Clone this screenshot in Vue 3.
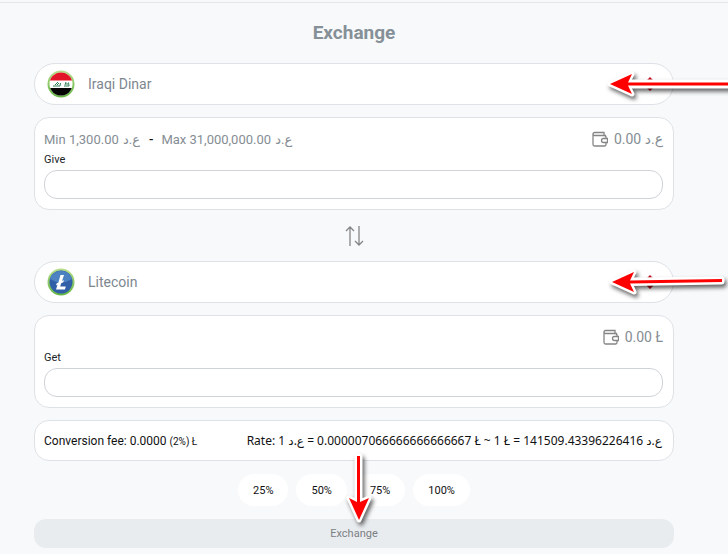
<script setup>
import { ref } from 'vue'

const from = ref('Iraqi Dinar')
const to = ref('Litecoin')
const give = ref('')
const get = ref('')
const percents = [25, 50, 75, 100]

function swap() {
  const previous = from.value
  from.value = to.value
  to.value = previous
}
</script>

<template>
  <main class="page">
    <h1>Exchange</h1>

    <div class="picker">
      <svg class="coin" viewBox="0 0 28 28" aria-hidden="true">
        <defs>
          <linearGradient id="ring" x1="0" y1="0" x2="0" y2="1">
            <stop offset="0" stop-color="#b9df8d" />
            <stop offset="1" stop-color="#62b441" />
          </linearGradient>
          <clipPath id="disc"><circle cx="14" cy="14" r="11.5" /></clipPath>
        </defs>
        <circle cx="14" cy="14" r="13.5" fill="url(#ring)" />
        <g clip-path="url(#disc)">
          <path fill="#fff" d="M2 2h24v24H2z" />
          <path fill="#e31528" d="M2 2h24v8.500H2z" />
          <path fill="#050505" d="M2 18h24v8H2z" />
        </g>
        <path d="M6 16h7l.5-3M8 15l3-3M10 15l2-2M17 16h5l-.5-3.500M18 15l1-3M20 15v-2" fill="none" stroke="#2f8058" stroke-width="1" />
      </svg>
      <select v-model="from" aria-label="Currency to give">
        <option>Iraqi Dinar</option>
        <option>Litecoin</option>
      </select>
      <svg class="chevrons" viewBox="0 0 6 14" aria-hidden="true"><path d="M0 4V3l3-3 3 3v1zM0 10v1l3 3 3-3v-1z" fill="#c40d1b" /></svg>
      <svg class="pointer" viewBox="0 0 130 36" aria-hidden="true">
        <path d="M3 18L25 8L21 16H140V20H21L25 28Z" fill="#f00" stroke="#fff" stroke-width="5" stroke-linejoin="round" />
        <path d="M3 18L25 8L21 16.500H140V19.500H21L25 28Z" fill="#f00" />
      </svg>
    </div>

    <section class="card">
      <div class="info">
        <p class="limits">
          <span>Min 1,300.00 <bdi class="unit">ع.د</bdi></span>
          <b>-</b>
          <span>Max 31,000,000.00 <bdi class="unit">ع.د</bdi></span>
        </p>
        <p class="balance">
          <svg class="wallet" viewBox="0 0 16 16" aria-hidden="true">
            <path d="M13.500 6V4.500H2.500A1.500 1.500 0 0 1 2.500 1.500H12V4.500M1 3V13.500A1.500 1.500 0 0 0 2.500 15H12.500A1.500 1.500 0 0 0 14 13.500V11.500M14 8V6A1.500 1.500 0 0 0 12.500 4.500M15.500 7.500V11.500H11.500A2 2 0 0 1 11.500 7.500Z" />
          </svg>
          <span>0.00 <bdi>ع.د</bdi></span>
        </p>
      </div>
      <label for="give">Give</label>
      <input id="give" v-model="give" type="text" inputmode="decimal">
    </section>

    <button class="swap" type="button" aria-label="Swap currencies" @click="swap">
      <svg viewBox="0 0 20 20" aria-hidden="true"><path d="M6 20V1M2 5l4-4 4 4M15 0v19M11 15l4 4 4-4" /></svg>
    </button>

    <div class="picker">
      <svg class="coin" viewBox="0 0 28 28" aria-hidden="true">
        <circle cx="14" cy="14" r="13.500" fill="url(#ring)" />
        <circle cx="14" cy="14" r="11.500" fill="#315fa7" />
        <path d="M3 11A11.500 11.500 0 0 1 25 11Q14 18 3 11" fill="#4d82c2" />
        <path d="M13.500 7h3.500l-2 6 2-1-.8 2.300-2 1-1 3.200h5.600l-.9 3H9l1.500-4.700-1.500.7.700-2.300 1.700-.8z" fill="#fff" />
      </svg>
      <select v-model="to" aria-label="Currency to get">
        <option>Litecoin</option>
        <option>Iraqi Dinar</option>
      </select>
      <svg class="chevrons" viewBox="0 0 6 14" aria-hidden="true"><path d="M0 4V3l3-3 3 3v1zM0 10v1l3 3 3-3v-1z" fill="#c40d1b" /></svg>
      <svg class="pointer" viewBox="0 0 130 36" aria-hidden="true">
        <path d="M5 18L27 8L23 16L115 15V18L23 19.500L27 28Z" fill="#f00" stroke="#fff" stroke-width="5" stroke-linejoin="round" />
        <path d="M5 18L27 8L23 16.500L115 15V18L23 19.500L27 28Z" fill="#f00" />
      </svg>
    </div>

    <section class="card">
      <div class="info end">
        <p class="balance">
          <svg class="wallet" viewBox="0 0 16 16" aria-hidden="true">
            <path d="M13.500 6V4.500H2.500A1.500 1.500 0 0 1 2.500 1.500H12V4.500M1 3V13.500A1.500 1.500 0 0 0 2.500 15H12.500A1.500 1.500 0 0 0 14 13.500V11.500M14 8V6A1.500 1.500 0 0 0 12.500 4.500M15.500 7.500V11.500H11.500A2 2 0 0 1 11.500 7.500Z" />
          </svg>
          <span>0.00 Ł</span>
        </p>
      </div>
      <label for="get">Get</label>
      <input id="get" v-model="get" type="text" inputmode="decimal">
    </section>

    <section class="rates">
      <p>Conversion fee: 0.0000 <small>(2%) Ł</small></p>
      <p class="rate">Rate: 1 <bdi>ع.د</bdi> = 0.000007066666666666667 Ł ~ 1 Ł = 141509.43396226416 <bdi>ع.د</bdi></p>
    </section>

    <div class="percents">
      <button v-for="p in percents" :key="p" type="button">{{ p }}%</button>
      <svg class="pointer-down" viewBox="0 0 36 80" aria-hidden="true">
        <path d="M18 71L8 49L16 53V7H19V53L28 49Z" fill="#f00" stroke="#fff" stroke-width="5" stroke-linejoin="round" />
        <path d="M18 71L8 49L16 53V7H19V53L28 49Z" fill="#f00" />
      </svg>
    </div>

    <button class="submit" type="button">Exchange</button>
  </main>
</template>

<style>
body {
  background: #f8f9fb;
}
</style>

<style scoped>
.page {
  display: flex;
  flex-direction: column;
  padding: 17px 54px 6px 34px;
  border-top: 1px solid #e4e6e9;
  margin-top: 2px;
  overflow: hidden;
  color: #111;
  font-family: Roboto, "DejaVu Sans", sans-serif;
  font-size: 12px;
}

h1 {
  margin: 0 0 18px;
  color: #869097;
  font-size: 19px;
  font-weight: 700;
  line-height: 25px;
  text-align: center;
}

p {
  margin: 0;
}

button,
input,
select {
  box-sizing: border-box;
  font: inherit;
}

.picker,
.card,
.rates {
  box-sizing: border-box;
  border: 1px solid #dee2e6;
  background: #fff;
}

.picker {
  position: relative;
  display: flex;
  align-items: center;
  height: 42px;
  padding: 0 20px 0 12px;
  border-radius: 21px;
}

.coin {
  width: 28px;
  height: 28px;
}

.picker select {
  flex: 1;
  height: 40px;
  padding: 0 13px;
  border: 0;
  appearance: none;
  background: transparent;
  color: #7d8790;
  font-size: 14px;
}

.chevrons {
  width: 6px;
  height: 14px;
}

.pointer,
.pointer-down {
  position: absolute;
  overflow: visible;
  pointer-events: none;
  filter: drop-shadow(2px 3px 2px #0009);
}

.pointer {
  top: 2px;
  right: -64px;
  width: 130px;
  height: 36px;
}

.card {
  display: flex;
  flex-direction: column;
  margin-top: 12px;
  padding: 10px 10px 10px 9px;
  border-radius: 15px;
}

.info {
  display: flex;
  align-items: center;
  justify-content: space-between;
  height: 22px;
  color: #858d94;
  font-size: 13px;
}

.end {
  justify-content: flex-end;
}

.limits {
  display: flex;
  gap: 8px;
}

.limits b {
  color: #111;
  font-weight: 500;
}

.unit {
  margin: 0 1px;
}

.balance {
  display: flex;
  align-items: center;
  gap: 6px;
  font-size: 14px;
}

.wallet {
  width: 16px;
  height: 16px;
  fill: none;
  stroke: #858585;
  stroke-width: 1.3;
}

label {
  color: #212529;
  font-size: 11px;
  line-height: 20px;
}

.card input {
  width: 100%;
  height: 29px;
  padding: 0 12px;
  border: 1px solid #cfd3d8;
  border-radius: 13px;
  background: #fff;
}

.swap {
  display: flex;
  align-items: center;
  justify-content: center;
  align-self: center;
  width: 40px;
  height: 51px;
  padding: 0;
  border: 0;
  background: transparent;
}

.swap svg {
  width: 20px;
  height: 20px;
  fill: none;
  stroke: #858585;
  stroke-width: 1.3;
}

.rates {
  display: flex;
  align-items: center;
  justify-content: space-between;
  min-height: 41px;
  margin-top: 12px;
  padding: 0 11px 0 9px;
  border-radius: 15px;
}

.rates small {
  font-size: 10px;
}

.rate {
  font-family: "Noto Sans", "DejaVu Sans", sans-serif;
}

.percents {
  position: relative;
  display: flex;
  align-self: center;
  gap: 8px;
  margin: 13px 0;
}

.percents button {
  height: 32px;
  padding: 0 15px;
  border: 0;
  border-radius: 16px;
  background: #fff;
  color: #111;
  font-size: 11px;
}

.pointer-down {
  top: -25px;
  left: 103px;
  width: 36px;
  height: 80px;
}

.submit {
  height: 29px;
  border: 0;
  border-radius: 12px;
  background: #e9ecef;
  color: #7b7f83;
  font-size: 11px;
}
</style>
